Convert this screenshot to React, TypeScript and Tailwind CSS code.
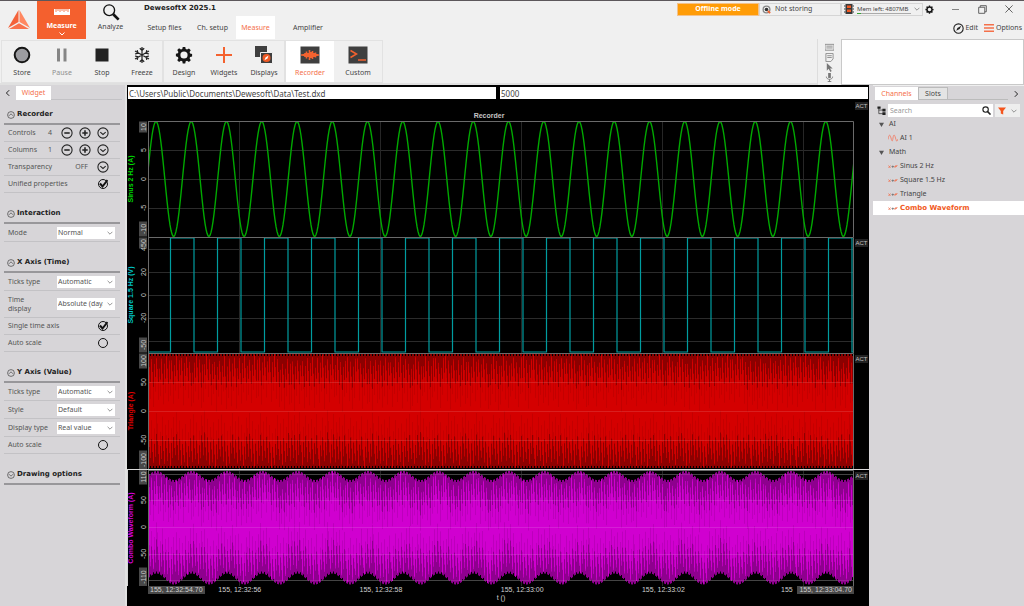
import { useState } from 'react'
import type { ReactNode } from 'react'
import clsx from 'clsx'

const PLOT_W = 706
const PLOT_H = 116
const GRID_X = [92, 233, 374, 515, 656]

function IconBox({ size = 'size-5', children }: { size?: string; children: ReactNode }) {
  return (
    <svg viewBox="0 0 20 20" className={clsx('shrink-0', size)} fill="none" aria-hidden="true">
      {children}
    </svg>
  )
}

const gearPath =
  'M8.6 1h2.8l.5 2.4 1.5.6 2.1-1.3 2 2-1.3 2.1.6 1.5 2.2.5v2.8l-2.2.5-.6 1.5 1.3 2.1-2 2-2.1-1.3-1.5.6-.5 2.4H8.6l-.5-2.4-1.5-.6-2.1 1.3-2-2 1.3-2.1-.6-1.5L1 11.400V8.600l2.200-.5.600-1.500L2.500 4.500l2-2 2.100 1.500 1.500-.6z'

const tools: Record<string, ReactNode> = {
  Store: <circle cx="10" cy="10" r="7.300" fill="#9c9ca0" stroke="#151515" strokeWidth="2" />,
  Pause: <path d="M5 3.500h3v13H5zM11.500 3.500h3v13h-3z" fill="#858585" />,
  Stop: <path d="M3.500 3.500h13v13h-13z" fill="#222" />,
  Freeze: (
    <path
      d="M10 2v16M3 6l14 8M3 14l14-8M7.800 3.200 10 5.300l2.200-2.100M7.800 16.800 10 14.700l2.200 2.100M3 9l3-.8-.8-3M17 11l-3 .8.8 3M3 11l3 .8-.8 3M17 9l-3-.8.8-3"
      stroke="#222"
      strokeWidth="1.200"
    />
  ),
  Design: (
    <g transform="translate(1 1) scale(.9)">
      <path fillRule="evenodd" d={gearPath + 'M10 6a4 4 0 1 0 0 8a4 4 0 0 0 0-8'} fill="#151515" />
    </g>
  ),
  Widgets: <path d="M10 2v16M2 10h16" stroke="#f4622f" strokeWidth="2" />,
  Displays: (
    <>
      <path d="M1 1h12v11H1z" fill="#3f3f3f" />
      <path d="M6.500 7.500h12v11h-12z" fill="#3f3f3f" stroke="#f0f0f0" />
      <circle cx="12.500" cy="13" r="4" fill="#f15a24" />
      <path d="m10.500 15.300 1-2.700 3-2-1 2.800z" fill="#fff" />
    </>
  ),
  Recorder: (
    <>
      <path d="M.5 1.500h19v17H.5z" fill="#3f3f3f" />
      <path d="M1 10h18M3.500 9v2M5 8v4M6.500 6.500v7M8 8v4M9.500 5v10M11 7v6M12.500 6v8M14 8v4M15.500 7.500v5M17 9v2" stroke="#f4622f" strokeWidth="1.600" />
    </>
  ),
  Custom: (
    <>
      <path d="M.5 1.500h19v17H.5z" fill="#3f3f3f" />
      <path d="m2.500 5.500 6 3.500-6 3.500M10 15h8" stroke="#f4622f" strokeWidth="1.500" />
    </>
  ),
}

function ToolButton({ name, active, muted }: { name: string; active?: boolean; muted?: boolean }) {
  return (
    <button
      className={clsx(
        'flex h-full flex-col items-center gap-1 pt-1',
        active ? 'w-12 bg-white text-[#f4704a]' : muted ? 'w-10 text-[#8f8f8f]' : 'w-10 text-[#444]',
      )}
    >
      <IconBox>{tools[name]}</IconBox>
      <span className="leading-none">{name}</span>
    </button>
  )
}

function StatusBar() {
  return (
    <div className="flex h-4 items-center">
      <div className="flex h-[13px] w-[82px] items-center justify-center border border-[#f3c28c] bg-[#ff9c07] font-bold text-white">
        Offline mode
      </div>
      <div className="flex h-[13px] w-[82px] items-center gap-1 border border-[#d5d5d5] px-0.5">
        <IconBox size="size-[9px]">
          <circle cx="10" cy="10" r="7.500" stroke="#888" strokeWidth="3" />
          <circle cx="10" cy="10" r="4" fill="#333" />
          <path d="m13 13 5 5" stroke="#f4622f" strokeWidth="4" />
        </IconBox>
        <span>Not storing</span>
      </div>
      <div className="flex h-[13px] w-[82px] items-center gap-[3px] border border-[#d5d5d5] px-0.5">
        <IconBox size="size-[10px]">
          <path d="M3 0h14v20H3z" fill="#3a3a3a" />
          <path d="M6 3h8v5H6zM6 11h8v5H6z" fill="#f15a24" />
          <path d="M0 4h3M0 10h3M0 16h3M17 4h3M17 10h3M17 16h3" stroke="#3a3a3a" strokeWidth="2" />
        </IconBox>
        <div className="flex flex-1 flex-col border-b border-[#aaa] text-[6px]">
          <span className="leading-[8px] whitespace-nowrap">Mem left: 4807MB</span>
          <span className="-mb-px h-px w-1 bg-[#36a336]" />
        </div>
        <Chevron className="size-[6px]" />
      </div>
      <div className="flex flex-1 items-center justify-between pr-[11px] pl-[2px]">
        <button aria-label="Settings" className="flex">
          <IconBox size="size-[9px]">
            <path fillRule="evenodd" d={gearPath + 'M10 6a4 4 0 1 0 0 8a4 4 0 0 0 0-8'} fill="#151515" />
          </IconBox>
        </button>
        <button aria-label="Minimize" className="flex">
          <IconBox size="size-[7px]">
            <path d="M0 10h20" stroke="#555" strokeWidth="2" />
          </IconBox>
        </button>
        <button aria-label="Restore" className="flex">
          <IconBox size="size-[9px]">
            <path d="M1.500 5h13.500v13.500H1.500zM5 5V1.500h13.500V15H15" stroke="#555" strokeWidth="2" />
          </IconBox>
        </button>
        <button aria-label="Close" className="flex">
          <IconBox size="size-2">
            <path d="m1 1 18 18M19 1 1 19" stroke="#444" strokeWidth="2" />
          </IconBox>
        </button>
      </div>
    </div>
  )
}

function Chevron({ className }: { className?: string }) {
  return (
    <svg viewBox="0 0 10 10" className={clsx('shrink-0', className)} fill="none" aria-hidden="true">
      <path d="m1 3 4 4 4-4" stroke="#777" strokeWidth="1.300" />
    </svg>
  )
}

function Header() {
  const [tab, setTab] = useState('Measure')
  return (
    <header className="flex h-[39px] border-t border-[#5c575b] bg-[#f0f0f0]">
      <div className="flex w-[37px] items-center justify-center">
        <svg viewBox="0 0 24 22" className="w-6" aria-label="Dewesoft">
          <path d="M11.500 1v12L1 19z" fill="#f4623a" />
          <path d="M12.500 1v12L23 19z" fill="#ff8760" />
          <path d="m12 14.200 10 5.800H2z" fill="#f9714b" />
        </svg>
      </div>
      <button className="flex w-[49px] flex-col items-center bg-[#f4602e] pt-2 font-bold text-white">
        <svg viewBox="0 0 18 7" className="w-[18px]" aria-hidden="true">
          <path d="M1 0h16v6H1z" fill="#fff" />
          <path d="M3 0v3M5 0v2M7 0v3M9 0v2M11 0v3M13 0v2M15 0v3" stroke="#f4602e" strokeWidth=".8" />
        </svg>
        <span className="mt-1 leading-[12px]">Measure</span>
        <svg viewBox="0 0 6 4" className="w-[6px]" fill="none" aria-hidden="true">
          <path d="m.5.5 2.500 2.500L5.500.5" stroke="#fff" />
        </svg>
      </button>
      <button className="flex w-[49px] flex-col items-center pt-[2px] text-[#444]">
        <IconBox size="size-[18px]">
          <circle cx="8" cy="8" r="6" stroke="#111" strokeWidth="1.500" />
          <path d="m12.500 12.500 6 6" stroke="#111" strokeWidth="3" />
        </IconBox>
        <span className="leading-[12px]">Analyze</span>
      </button>
      <div className="flex flex-1 flex-col pl-[5px]">
        <h1 className="h-[15px] pl-1 font-['DejaVu_Sans',sans-serif] text-[7px] leading-[14px] font-bold text-[#222]">
          DewesoftX 2025.1
        </h1>
        <nav className="flex flex-1">
          {['Setup files', 'Ch. setup', 'Measure', 'Amplifier'].map((name) => (
            <button
              key={name}
              onClick={() => setTab(name)}
              className={clsx(
                name === 'Setup files' ? 'w-[49px]' : name === 'Ch. setup' ? 'w-[47px]' : name === 'Measure' ? 'w-[39px]' : 'w-[66px]',
                tab === name ? 'bg-white text-[#f4704a]' : 'text-[#444]',
              )}
            >
              {name}
            </button>
          ))}
        </nav>
      </div>
      <div className="flex w-[347px] flex-col text-[#444]">
        <StatusBar />
        <div className="flex flex-1 items-center justify-end gap-1.5 pr-0.5">
          <button className="flex items-center gap-px">
            <IconBox size="size-[11px]">
              <circle cx="10" cy="10" r="8.500" stroke="#222" strokeWidth="2" />
              <path d="m6 14 2-5 7-4-3 6z" fill="#222" />
            </IconBox>
            Edit
          </button>
          <button className="flex items-center gap-0.5">
            <IconBox size="size-[10px]">
              <path d="M0 3.500h20M0 10h20M0 16.500h20" stroke="#f4704a" strokeWidth="3" />
            </IconBox>
            Options
          </button>
        </div>
      </div>
    </header>
  )
}

function Toolbar() {
  return (
    <div className="flex h-[46px] bg-[#f0f0f0]">
      <div className="flex flex-1 border-b-2 border-[#e0e0e0] pt-px pl-px">
        <div className="flex border border-[#e2e2e2]">
          <ToolButton name="Store" />
          <ToolButton name="Pause" muted />
          <ToolButton name="Stop" />
          <ToolButton name="Freeze" />
        </div>
        <div className="flex border border-[#e2e2e2]">
          <ToolButton name="Design" />
          <ToolButton name="Widgets" />
          <ToolButton name="Displays" />
        </div>
        <div className="flex border border-[#e2e2e2]">
          <ToolButton name="Recorder" active />
          <div className="flex w-12 justify-center">
            <ToolButton name="Custom" />
          </div>
        </div>
      </div>
      <div className="flex w-[24px] flex-col items-center justify-center gap-px border-l border-[#ddd]">
        <IconBox size="size-[9px]">
          <path d="M0 3h20v13H0zM3 7h14M3 11h14" stroke="#8a8a8a" strokeWidth="2" />
        </IconBox>
        <IconBox size="size-[9px]">
          <path d="M2 1h16v12l-5 6H2zM5 6h10M5 10h10" stroke="#8a8a8a" strokeWidth="2" />
        </IconBox>
        <IconBox size="size-[9px]">
          <path d="M4 0v17l4-4 4 7 3-2-4-6h6z" fill="#777" />
        </IconBox>
        <IconBox size="size-[9px]">
          <path d="M7 0h6v11H7z" fill="#777" />
          <path d="M3 8c0 8 14 8 14 0M10 14v6M6 19h8" stroke="#777" strokeWidth="2" />
        </IconBox>
      </div>
      <textarea aria-label="Notes" className="w-[183px] resize-none border border-[#c9c9c9] bg-white" />
    </div>
  )
}

function Section({ title, first, closed, children }: { title: string; first?: boolean; closed?: boolean; children?: ReactNode }) {
  return (
    <section>
      <h2
        className={clsx(
          "flex items-end gap-[2px] border-b-2 border-[#98979a] pb-1 pl-[3px] font-['DejaVu_Sans',sans-serif] font-bold text-[#222]",
          first ? 'h-6' : 'h-[31px]',
        )}
      >
        <IconBox size="size-2">
          <circle cx="10" cy="10" r="8.500" stroke="#444" strokeWidth="1.800" />
          <path d={closed ? 'm5 8 5 5 5-5' : 'm5 12 5-5 5 5'} stroke="#444" strokeWidth="1.800" />
        </IconBox>
        <span className="leading-[9px]">{title}</span>
      </h2>
      {children}
    </section>
  )
}

const roundIcons = {
  minus: 'M5.500 10h9',
  plus: 'M5.500 10h9M10 5.500v9',
  down: 'm5.500 8.500 4.500 4 4.500-4',
}

function RoundButton({ kind, label }: { kind: keyof typeof roundIcons; label: string }) {
  return (
    <button aria-label={label} className="flex">
      <IconBox size="size-3">
        <circle cx="10" cy="10" r="8.500" stroke="#222" strokeWidth="1.800" />
        <path d={roundIcons[kind]} stroke="#222" strokeWidth={kind === 'down' ? 1.7 : 2.6} />
      </IconBox>
    </button>
  )
}

const rowClass = 'flex items-center border-b border-[#c3c2c5] pl-1 text-[#555]'

function CounterRow({ label, value }: { label: string; value: number }) {
  return (
    <div className={clsx(rowClass, 'h-[17px] pr-[11px]')}>
      <span className="flex-1">{label}</span>
      <span className="mr-[9px]">{value}</span>
      <div className="flex gap-[6px]">
        <RoundButton kind="minus" label={`Decrease ${label}`} />
        <RoundButton kind="plus" label={`Increase ${label}`} />
        <RoundButton kind="down" label={`Choose ${label}`} />
      </div>
    </div>
  )
}

function CheckRow({ label, checked }: { label: string; checked?: boolean }) {
  const [on, setOn] = useState(!!checked)
  return (
    <label className={clsx(rowClass, 'h-[17px] pr-3')}>
      <span className="flex-1">{label}</span>
      <span className="relative flex size-[10px]">
        <input
          type="checkbox"
          checked={on}
          onChange={(e) => setOn(e.target.checked)}
          className="size-[10px] appearance-none rounded-full border border-[#111]"
        />
        {on && (
          <svg viewBox="0 0 10 10" className="pointer-events-none absolute inset-0" fill="none">
            <path d="m2 4.500 2.500 3L9.500 1" stroke="#111" strokeWidth="2" />
          </svg>
        )}
      </span>
    </label>
  )
}

function SelectRow({ label, value, tall }: { label: string; value: string; tall?: boolean }) {
  return (
    <label className={clsx(rowClass, 'pr-[5px]', tall ? 'h-[27px]' : 'h-[18px]')}>
      <span className={clsx('leading-[9px]', tall ? 'w-8' : 'w-[49px]')}>{label}</span>
      <span className="relative ml-auto flex w-[58px]">
        <select className="h-3 w-full appearance-none bg-white pr-3 pl-px text-[#555]">
          <option>{value}</option>
        </select>
        <Chevron className="pointer-events-none absolute top-[3px] right-[2px] size-[6px]" />
      </span>
    </label>
  )
}

function WidgetPanel() {
  return (
    <aside className="w-[127px] shrink-0 border-r-2 border-[#e2e2e2] bg-[#d7d5d8]">
      <div className="flex h-4 items-start pt-px pr-[3px]">
        <button aria-label="Collapse panel" className="flex h-[14px] w-4 items-center justify-center">
          <IconBox size="size-2">
            <path d="m13 3-7 7 7 7" stroke="#222" strokeWidth="2.500" />
          </IconBox>
        </button>
        <button className="h-[14px] w-[35px] bg-white text-[#f4704a]">Widget</button>
        <span className="h-[14px] flex-1 border-b border-[#c3c2c5]" />
      </div>
      <div className="pr-[5px] pl-1">
        <Section title="Recorder" first>
          <CounterRow label="Controls" value={4} />
          <CounterRow label="Columns" value={1} />
          <div className={clsx(rowClass, 'h-[17px] pr-[11px]')}>
            <span className="flex-1">Transparency</span>
            <span className="mr-[9px]">OFF</span>
            <RoundButton kind="down" label="Choose transparency" />
          </div>
          <CheckRow label="Unified properties" checked />
        </Section>
        <Section title="Interaction">
          <SelectRow label="Mode" value="Normal" />
        </Section>
        <Section title="X Axis (Time)">
          <SelectRow label="Ticks type" value="Automatic" />
          <SelectRow label="Time display" value="Absolute (day/time)" tall />
          <CheckRow label="Single time axis" checked />
          <CheckRow label="Auto scale" />
        </Section>
        <Section title="Y Axis (Value)">
          <SelectRow label="Ticks type" value="Automatic" />
          <SelectRow label="Style" value="Default" />
          <SelectRow label="Display type" value="Real value" />
          <CheckRow label="Auto scale" />
        </Section>
        <Section title="Drawing options" closed />
      </div>
    </aside>
  )
}

// 2 Hz sine, one period every 35.25 units
const sine2Hz = (x: number) => Math.cos((2 * Math.PI * (x - 8)) / 35.25)

function sinePath() {
  let d = ''
  for (let x = 0; x <= PLOT_W; x++) d += `${x ? 'L' : 'M'}${x} ${(58 - 57.5 * sine2Hz(x)).toFixed(1)}`
  return d
}

function squarePath() {
  let d = 'M0 115'
  let high = false
  for (let x = 22.5; x < PLOT_W; x += 23.5) {
    d += `H${x}V${high ? 115 : 1}`
    high = !high
  }
  return d + `H${PLOT_W}`
}

// Aliased fast signal: one vertical stroke per column, inset from its envelope
function stripes(top: (x: number) => number, bottom: (x: number) => number, spread: number) {
  let d = ''
  for (let x = 0; x < PLOT_W; x++) {
    const a = (x * 0.382 + Math.floor(x / 11) * 0.17) % 1
    const b = (x * 0.618 + Math.floor(x / 9) * 0.23) % 1
    d += `M${x + 0.5} ${(top(x) + a * spread).toFixed(1)}V${(bottom(x) - b * spread).toFixed(1)}`
  }
  return d
}

const tip = (x: number) => (x % 3 === 2 ? 2 : 0)
const redTop = (x: number) => 1 + tip(x)
const redBottom = (x: number) => 115 - tip(x)
const comboTop = (x: number) => 5.5 - 4.5 * sine2Hz(x) + tip(x)
const comboBottom = (x: number) => 109 - 5.5 * sine2Hz(x) - tip(x)

type Tick = { y: number; label: string; box?: boolean }

const panes: { name: string; color: string; ticks: Tick[]; grid: number[]; dense?: boolean; curve: ReactNode }[] = [
  {
    name: 'Sinus 2 Hz (A)',
    color: '#00d800',
    ticks: [
      { y: 6, label: '10', box: true },
      { y: 29, label: '5' },
      { y: 58, label: '0' },
      { y: 87, label: '-5' },
      { y: 108, label: '-10', box: true },
    ],
    grid: [29, 58, 87],
    curve: <path d={sinePath()} stroke="#00a800" strokeWidth="1.400" />,
  },
  {
    name: 'Square 1.5 Hz (V)',
    color: '#00c8c8',
    ticks: [
      { y: 6, label: '50', box: true },
      { y: 12, label: '4' },
      { y: 35, label: '20' },
      { y: 58, label: '0' },
      { y: 81, label: '-20' },
      { y: 108, label: '-50', box: true },
    ],
    grid: [12, 35, 58, 81, 104],
    curve: <path d={squarePath()} stroke="#009c9f" strokeWidth="1.200" />,
  },
  {
    name: 'Triangle (A)',
    color: '#e00000',
    ticks: [
      { y: 8, label: '100', box: true },
      { y: 29, label: '50' },
      { y: 58, label: '0' },
      { y: 87, label: '-50' },
      { y: 107, label: '-100', box: true },
    ],
    grid: [29, 58, 87],
    dense: true,
    curve: (
      <>
        <path d={stripes(redTop, redBottom, 0)} stroke="#8c0000" />
        <path d={stripes(redTop, redBottom, 34)} stroke="#c40000" />
        <path d={stripes(redTop, redBottom, 56)} stroke="#d40000" />
      </>
    ),
  },
  {
    name: 'Combo Waveform (A)',
    color: '#d800d8',
    ticks: [
      { y: 7, label: '110', box: true },
      { y: 30, label: '50' },
      { y: 57, label: '0' },
      { y: 84, label: '-50' },
      { y: 107, label: '-110', box: true },
    ],
    grid: [4, 30, 57, 84, 110],
    dense: true,
    curve: (
      <>
        <path d={stripes(comboTop, comboBottom, 0)} stroke="#8e008e" />
        <path d={stripes(comboTop, comboBottom, 34)} stroke="#bc00bc" />
        <path d={stripes(comboTop, comboBottom, 52)} stroke="#d000d0" />
      </>
    ),
  },
]

function Pane({ pane, badge = true }: { pane: (typeof panes)[number]; badge?: boolean }) {
  return (
    <div className="flex h-[116px]">
      <svg viewBox="0 0 21 116" className="w-[21px] shrink-0 text-[7px]" textAnchor="middle">
        <text transform="translate(6 58) rotate(-90)" fill={pane.color} fontWeight="bold">
          {pane.name}
        </text>
        {pane.ticks.map((tick) => {
          const w = tick.label.length * 4 + 3
          return (
            <g key={tick.label} transform={`translate(19 ${tick.y}) rotate(-90)`}>
              {tick.box && <rect x={-w / 2} y="-7" width={w} height="8" fill="#484848" />}
              <text fill="#c8c8c8">{tick.label}</text>
            </g>
          )
        })}
      </svg>
      <svg viewBox={`0 0 ${PLOT_W} ${PLOT_H}`} preserveAspectRatio="none" className="h-full min-w-0 flex-1" fill="none">
        {pane.grid.map((y) => (
          <path key={y} d={`M0 ${y + 0.5}H${PLOT_W}`} stroke="#2b2b2b" />
        ))}
        {GRID_X.map((x) => (
          <path key={x} d={`M${x - 0.5} 0V${PLOT_H}`} stroke="#262626" />
        ))}
        {pane.curve}
        {pane.dense &&
          pane.grid.map((y) => <path key={y} d={`M0 ${y + 0.5}H${PLOT_W}`} stroke="#fff" opacity=".12" />)}
        <path d={`M.5 .5H${PLOT_W - 0.5}V${PLOT_H}M.5 0V${PLOT_H}`} stroke="#6a6a6a" />
      </svg>
      <div className="w-[15px] pt-0.5 pl-px">{badge && <ActBadge />}</div>
    </div>
  )
}

function ActBadge() {
  return <div className="h-2 w-[13px] bg-[#222] text-center text-[6px] leading-[8px] text-[#c0c0c0]">ACT</div>
}

// The last one only has room for its day number beside the end-of-range label
const timeLabels = [
  { left: '13%', label: '155, 12:32:56' },
  { left: '33%', label: '155, 12:32:58' },
  { left: '53%', label: '155, 12:33:00' },
  { left: '73%', label: '155, 12:33:02' },
  { left: '90.5%', label: '155' },
]

function RecorderView() {
  return (
    <main className="flex min-w-0 flex-1 flex-col bg-black font-['Liberation_Sans',Arial,sans-serif]">
      <div className="flex h-4 gap-1 border-t-2 border-black px-px pb-0.5 font-['Noto_Sans','Open_Sans',sans-serif] text-[8px]">
        <input
          aria-label="Data file"
          defaultValue="C:\Users\Public\Documents\Dewesoft\Data\Test.dxd"
          className="h-3 min-w-0 flex-1 bg-white px-px text-[#444]"
        />
        <input aria-label="Sample rate" defaultValue="5000" className="h-3 min-w-0 flex-1 bg-white px-px text-[#444]" />
      </div>
      <div className="flex h-5">
        <div className="w-[21px]" />
        <h2 className="flex-1 self-end pr-6 text-center text-[7px] leading-[10px] font-bold text-[#c4c4c4]">Recorder</h2>
        <div className="w-[15px] pt-px pl-px">
          <ActBadge />
        </div>
      </div>
      {panes.slice(0, 3).map((pane, i) => (
        <Pane key={pane.name} pane={pane} badge={i > 0} />
      ))}
      <div className="pt-px shadow-[inset_1px_1px_0_#d8d8d8]">
        <Pane pane={panes[3]} />
      </div>
      <div className="relative mr-[15px] ml-[21px] h-2 text-[7px] leading-[8px] text-[#d0d0d0]">
        {timeLabels.map((t) => (
          <span key={t.left} className="absolute -translate-x-1/2 whitespace-nowrap" style={{ left: t.left }}>
            {t.label}
          </span>
        ))}
        <span className="absolute left-0 bg-[#484848] px-0.5">155, 12:32:54.70</span>
        <span className="absolute right-0 bg-[#484848] px-0.5">155, 12:33:04.70</span>
      </div>
      <p className="pl-1.5 text-center text-[7px] leading-[8px] text-[#d0d0d0]">t ()</p>
    </main>
  )
}

const mathChannels = ['Sinus 2 Hz', 'Square 1.5 Hz', 'Triangle', 'Combo Waveform']

function TreeGroup({ name, children }: { name: string; children: ReactNode }) {
  return (
    <li>
      <div className="flex h-[14px] items-center gap-[5px] pl-[6px]">
        <svg viewBox="0 0 6 6" className="w-[5px]" aria-hidden="true">
          <path d="M0 1h6L3 6z" fill="#555" />
        </svg>
        {name}
      </div>
      <ul>{children}</ul>
    </li>
  )
}

function ChannelPanel() {
  const [selected, setSelected] = useState('Combo Waveform')
  return (
    <aside className="w-[155px] shrink-0 bg-[#d7d5d8] pl-1 text-[#444]">
      <div className="flex h-[17px] items-start border-t border-[#efefef] pt-px pl-0.5">
        <button className="h-[13px] w-[43px] bg-white text-[#f4704a]">Channels</button>
        <button className="h-[13px] w-[30px] border border-[#bbb] bg-[#e4e4e4]">Slots</button>
        <span className="h-[13px] flex-1 border-b border-[#bbb]" />
        <button aria-label="Collapse panel" className="flex h-[14px] w-4 items-center justify-center">
          <IconBox size="size-2">
            <path d="m7 3 7 7-7 7" stroke="#222" strokeWidth="2.500" />
          </IconBox>
        </button>
      </div>
      <div className="flex items-center gap-0.5 pt-0.5 pr-1 pl-1">
        <IconBox size="size-[9px]">
          <path d="M4 4v13h9M4 9h9" stroke="#222" strokeWidth="1.500" />
          <path d="M1 1h7v5H1zM12 6h7v6h-7zM12 14h7v6h-7z" fill="#222" />
        </IconBox>
        <label className="flex h-[13px] flex-1 items-center bg-white px-0.5">
          <input aria-label="Search" placeholder="Search" className="w-0 flex-1 placeholder:text-[#999]" />
          <IconBox size="size-[9px]">
            <circle cx="8" cy="8" r="6" stroke="#222" strokeWidth="2.500" />
            <path d="m12 12 7 7" stroke="#222" strokeWidth="3.500" />
          </IconBox>
        </label>
        <button aria-label="Filter" className="flex h-[13px] w-[25px] items-center justify-between bg-[#eee] px-[3px]">
          <IconBox size="size-2">
            <path d="M0 1h20l-7 9v9l-6-3v-6z" fill="#f4541c" />
          </IconBox>
          <Chevron className="size-[6px]" />
        </button>
      </div>
      <ul>
        <TreeGroup name="AI">
          <li>
            <button className="flex h-[14px] w-full items-center gap-0.5 pl-[15px]">
              <svg viewBox="0 0 20 16" className="w-[10px]" fill="none" aria-hidden="true">
                <path d="M0 11C2 0 4 0 6 8s3 8 4 0 3-8 5 0 3 8 5 2" stroke="#f0806a" strokeWidth="1.800" />
              </svg>
              AI 1
            </button>
          </li>
        </TreeGroup>
        <TreeGroup name="Math">
          {mathChannels.map((name) => (
            <li key={name}>
              <button
                onClick={() => setSelected(name)}
                className={clsx(
                  'flex h-[14px] w-full items-center gap-[2px] pl-[15px]',
                  selected === name && "bg-white font-['DejaVu_Sans',sans-serif] font-bold text-[#f15a24]",
                )}
              >
                <svg viewBox="0 0 20 10" className="w-[10px]" fill="none" aria-hidden="true">
                  <path d="m1 3 4 5M5 3 1 8M14 8c0-6 1-5 5-5M13 5h5" stroke="#f0704f" strokeWidth="1.500" />
                  <path d="M7 5h5M9.500 3v5" stroke="#666" strokeWidth="1.300" />
                </svg>
                {name}
              </button>
            </li>
          ))}
        </TreeGroup>
      </ul>
    </aside>
  )
}

export default function App() {
  return (
    <div className="flex min-h-screen flex-col bg-[#d7d5d8] font-['Noto_Sans','Open_Sans',sans-serif] text-[7px] leading-[10px]">
      <Header />
      <Toolbar />
      <div className="flex flex-1">
        <WidgetPanel />
        <RecorderView />
        <ChannelPanel />
      </div>
    </div>
  )
}
